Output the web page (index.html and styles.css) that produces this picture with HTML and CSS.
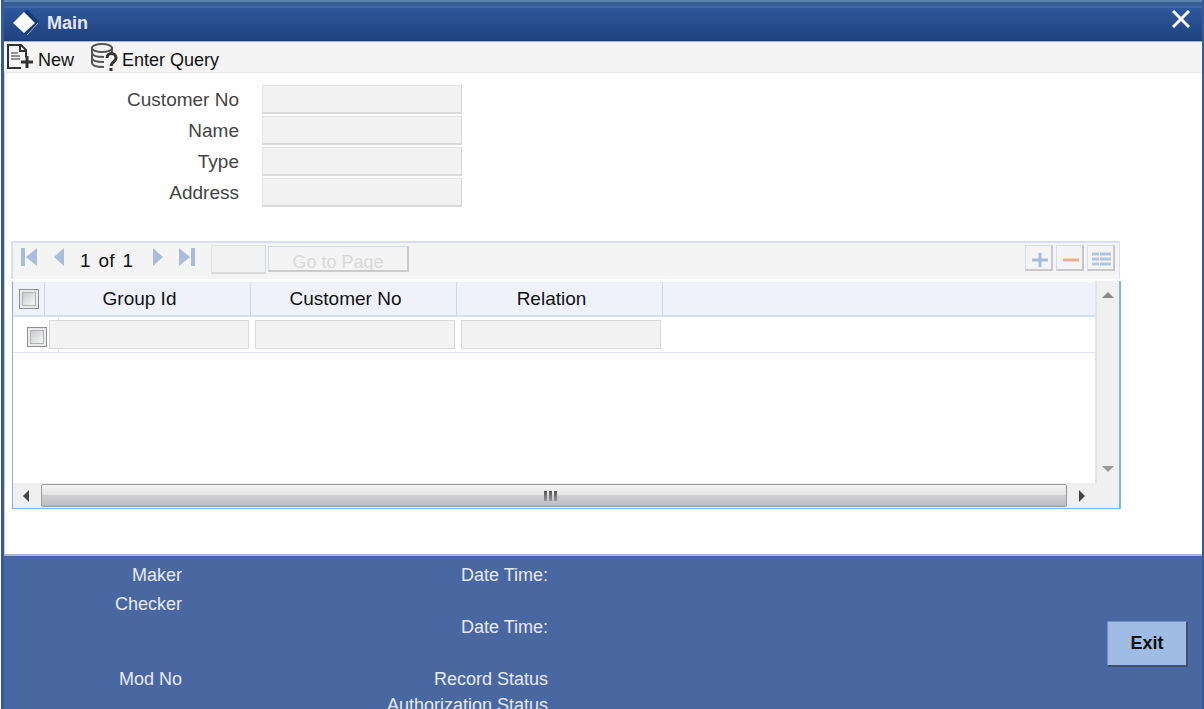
FILE: index.html
```html
<!DOCTYPE html>
<html lang="en">
<head>
<meta charset="UTF-8">
<meta name="viewport" content="width=device-width, initial-scale=1.0">
<title>Main</title>
<link rel="stylesheet" href="styles.css">
</head>
<body>

<div class="window">
  <!-- Title bar -->
  <header class="title-bar">
    <svg class="logo" width="26" height="26" viewBox="0 0 26 26">
      <path d="M11 1l4-1 11 12-12 13-3-2z" fill="#173a75"/>
      <path d="M25 13L14 25" stroke="#a9b8d4" stroke-width="1"/>
      <path d="M11 2l11 11-11 10L0 13z" fill="#fff"/>
    </svg>
    <h1>Main</h1>
    <button class="close" type="button" aria-label="Close">
      <svg width="18" height="18" viewBox="0 0 18 18"><path d="M1 1l16 16M17 1L1 17" stroke="#fff" stroke-width="3"/></svg>
    </button>
  </header>

  <!-- Toolbar -->
  <div class="toolbar">
    <button type="button">
      <svg width="28" height="26" viewBox="0 0 28 26" fill="none" stroke="#333" stroke-width="2">
        <path d="M15 24H2V1h13l5 5v7M14 1v6h6"/>
        <path d="M5 9h7M5 12h9M5 15h9" stroke-width="1"/>
        <path d="M21 12v12M15 18h12" stroke-width="3"/>
      </svg>
      <span>New</span>
    </button>
    <button type="button">
      <svg width="28" height="28" viewBox="0 0 28 28" fill="none" stroke="#555" stroke-width="1">
        <ellipse cx="12" cy="5" rx="10" ry="4" stroke-width="2"/>
        <path d="M2 5v15c0 3 4 4 12 4M22 5v5M2 10c0 3 4 4 12 4M2 15c0 3 4 4 12 4" stroke-width="2"/>
        <path d="M17 15c0-6 9-6 9 0 0 4-5 4-5 8M21 25v3" stroke="#333" stroke-width="3"/>
      </svg>
      <span>Enter Query</span>
    </button>
  </div>

  <!-- Content -->
  <main class="content">
    <form class="customer">
      <label for="custNo">Customer No</label>
      <input type="text" id="custNo" disabled>
      <label for="custName">Name</label>
      <input type="text" id="custName" disabled>
      <label for="custType">Type</label>
      <input type="text" id="custType" disabled>
      <label for="custAddress">Address</label>
      <input type="text" id="custAddress" disabled>
    </form>

    <div class="pager">
      <button class="nav" type="button" aria-label="First page" disabled>
        <svg width="18" height="18" viewBox="0 0 18 18"><path d="M1 0h4v18H1zM17 0v18L6 9z"/></svg>
      </button>
      <button class="nav" type="button" aria-label="Previous page" disabled>
        <svg width="10" height="18" viewBox="0 0 10 18"><path d="M10 0v18L0 9z"/></svg>
      </button>
      <span class="count"><span>1</span> <span>of</span> <span>1</span></span>
      <button class="nav" type="button" aria-label="Next page" disabled>
        <svg width="10" height="18" viewBox="0 0 10 18"><path d="M0 0v18l10-9z"/></svg>
      </button>
      <button class="nav" type="button" aria-label="Last page" disabled>
        <svg width="18" height="18" viewBox="0 0 18 18"><path d="M12 0h4v18h-4zM0 0v18l11-9z"/></svg>
      </button>
      <input class="page-no" type="text" aria-label="Page number" disabled>
      <button class="go" type="button" disabled>Go to Page</button>
      <div class="row-tools">
        <button type="button" aria-label="Add row" disabled>
          <svg width="24" height="22" viewBox="0 0 24 22"><path d="M14 6v14M6 13h16" stroke="#a9bddb" stroke-width="3"/></svg>
        </button>
        <button type="button" aria-label="Delete row" disabled>
          <svg width="24" height="22" viewBox="0 0 24 22"><path d="M6 13h16" stroke="#f3d5b0" stroke-width="4"/><path d="M6 13h16" stroke="#f2a9a0" stroke-width="2"/></svg>
        </button>
        <button type="button" aria-label="Single record view" disabled>
          <svg width="24" height="22" viewBox="0 0 24 22"><path d="M4 7h7M12 7h11M4 12h7M12 12h11M4 17h7M12 17h11" stroke="#b3c6e0" stroke-width="3"/></svg>
        </button>
      </div>
    </div>

    <div class="grid">
      <div class="table-area">
        <table>
          <thead>
            <tr>
              <th class="check"><input type="checkbox" aria-label="Select all"></th>
              <th class="field">Group Id</th>
              <th class="field">Customer No</th>
              <th class="field">Relation</th>
              <th></th>
            </tr>
          </thead>
          <tbody>
            <tr>
              <td class="check"><input type="checkbox" aria-label="Select row"></td>
              <td><input type="text" aria-label="Group Id" disabled></td>
              <td><input type="text" aria-label="Customer No" disabled></td>
              <td><input type="text" aria-label="Relation" disabled></td>
              <td></td>
            </tr>
          </tbody>
        </table>
      </div>
      <div class="vscroll">
        <svg width="12" height="8" viewBox="0 0 12 8"><path d="M0 7l6-6 6 6z" fill="#888"/></svg>
        <svg width="12" height="8" viewBox="0 0 12 8"><path d="M0 1l6 6 6-6z" fill="#999"/></svg>
      </div>
      <div class="hscroll">
        <svg width="8" height="12" viewBox="0 0 8 12"><path d="M7 0v12L1 6z" fill="#444"/></svg>
        <div class="thumb"><i></i><i></i><i></i></div>
        <svg width="8" height="12" viewBox="0 0 8 12"><path d="M1 0v12l6-6z" fill="#444"/></svg>
      </div>
      <div class="corner"></div>
    </div>
  </main>

  <!-- Audit footer -->
  <footer class="audit">
    <div class="audit-left">
      <span>Maker</span>
      <span>Checker</span>
      <span class="mod">Mod No</span>
    </div>
    <div class="audit-right">
      <span>Date Time:</span>
      <span class="second">Date Time:</span>
      <span class="status">Record Status</span>
      <span>Authorization Status</span>
    </div>
    <button class="exit" type="button">Exit</button>
  </footer>
</div>

</body>
</html>
```
FILE: styles.css
```css
* {
  box-sizing: border-box;
}
body {
  margin: 0;
  font-family: "Liberation Sans", Arial, sans-serif;
  font-size: 18px;
  color: #111;
  background: #fff;
}
button, input {
  font: inherit;
  margin: 0;
}
button {
  padding: 0;
  border: 0;
  background: none;
  color: inherit;
}
svg {
  display: block;
  flex: none;
}
.window {
  display: flex;
  flex-direction: column;
  height: 100vh;
  margin-left: 1px;
  overflow: hidden;
  border: 3px solid #3a5a96;
  border-width: 0 2px 0 3px;
  background: #fff;
}

/* title bar */
.title-bar {
  display: flex;
  align-items: center;
  flex: none;
  height: 42px;
  padding: 2px 12px 0 9px;
  border-top: 2px solid #5f83b2;
  border-bottom: 1px solid #a4b4d3;
  background: linear-gradient(#385d95 0, #385d95 4px, #3f69a7 4px, #3f69a7 6px, #2d589d 6px, #20427f 38px, #1b3872 39px);
}
.title-bar h1 {
  margin: 0 auto 0 8px;
  font-size: 18px;
  line-height: 24px;
  color: #e4e7ee;
}
.close {
  margin-bottom: 8px;
}

/* toolbar */
.toolbar {
  display: flex;
  align-items: center;
  flex: none;
  gap: 16px;
  height: 31px;
  padding-left: 2px;
  border-bottom: 1px solid #e6e6e6;
  background: #f4f4f4;
}
.toolbar button {
  display: flex;
  align-items: center;
  gap: 4px;
}
.toolbar span {
  padding-top: 6px;
}

/* customer form */
.content {
  flex: none;
  padding: 12px 81px 45px 6px;
  border-left: 1px solid #c3cde0;
}
.customer {
  display: grid;
  grid-template-columns: 228px 200px;
  column-gap: 23px;
  row-gap: 2px;
}
.customer label {
  font-size: 19px;
  line-height: 29px;
  text-align: right;
  color: #444;
}
input[type="text"] {
  height: 29px;
  border: 1px solid #e2e2e2;
  border-right-color: #d6d6d6;
  border-bottom: 2px solid #dadada;
  background: #f2f2f2;
}

/* record pager */
.pager {
  display: flex;
  align-items: center;
  height: 38px;
  margin: 34px 1px 2px 0;
  padding: 0 4px 4px 7px;
  border: 1px solid #d8e0ef;
  border-width: 2px 1px 0 2px;
  background: #f4f4f4;
  font-size: 19px;
}
.pager .nav {
  margin: 0 16px 4px 0;
  fill: #a9bddb;
}
.pager .count {
  display: flex;
  gap: 8px;
  margin-right: 20px;
  padding-top: 4px;
}
.pager .page-no {
  width: 55px;
  margin: 0 2px 0 -2px;
}
.pager .go {
  width: 141px;
  height: 26px;
  border: 1px solid #ccdaea;
  border-right: 2px solid #ccc;
  border-bottom: 2px solid #ccc;
  overflow: hidden;
  font-size: 18px;
  line-height: 30px;
  color: #dadada;
}
.row-tools {
  display: flex;
  gap: 3px;
  margin: 0 0 2px auto;
}
.row-tools button {
  width: 28px;
  height: 26px;
  border: 1px solid #d3dded;
  border-right: 2px solid #c8c8c8;
  border-bottom: 2px solid #c8c8c8;
}

/* data grid */
.grid {
  display: grid;
  grid-template-columns: 1fr 24px;
  grid-template-rows: 202px 25px;
  margin-left: 1px;
  border: 1px solid #86b1e6;
  border-width: 0 2px 1px 1px;
}
.table-area {
  padding-top: 1px;
  overflow: hidden;
}
table {
  width: 100%;
  border-collapse: separate;
  border-spacing: 0;
  table-layout: fixed;
}
th {
  height: 35px;
  padding: 0;
  border-right: 1px solid #ccd7ea;
  border-bottom: 2px solid #d5dfee;
  background: #eff2fb;
  font-size: 19px;
  font-weight: normal;
}
th:last-child {
  border-right: 0;
}
th.check {
  width: 32px;
}
th.field {
  width: 206px;
  padding-right: 16px;
}
td {
  height: 36px;
  padding: 0 0 0 4px;
  border-bottom: 1px solid #dfe6f5;
}
td input[type="text"] {
  display: block;
  width: 200px;
  border: 1px solid #dadada;
}
td.check {
  position: relative;
  padding-left: 14px;
}
/* frame of the row selector, reaches under the first field */
td.check::after {
  content: "";
  position: absolute;
  top: 0;
  left: 45px;
  width: 1px;
  height: 36px;
  background: #dfe6f5;
}
td.check + td input {
  position: relative;
}
input[type="checkbox"] {
  appearance: none;
  display: block;
  width: 20px;
  height: 20px;
  border: 1px solid #8f8f8f;
  background: linear-gradient(135deg, #c9cbce, #f6f6f6) center / 12px 12px no-repeat, #ebebeb;
  outline: 1px solid #b2b2b2;
  outline-offset: -4px;
}
th.check input {
  margin-left: 6px;
}
td.check input {
  margin-top: 4px;
}

/* scrollbars */
.vscroll {
  display: flex;
  flex-direction: column;
  align-items: center;
  justify-content: space-between;
  padding: 10px 0;
  border-left: 2px solid #e3e3e3;
  background: #f0f0f0;
}
.hscroll {
  display: flex;
  align-items: center;
  gap: 11px;
  padding: 0 9px;
  background: #f0f0f0;
}
.thumb {
  display: flex;
  flex: 1;
  align-items: center;
  justify-content: center;
  gap: 2px;
  height: 23px;
  padding-right: 8px;
  border: 1px solid #999;
  border-radius: 2px;
  background: linear-gradient(#f3f3f3, #e4e4e5 45%, #cfcfd2 50%, #bcbcbe);
}
.thumb i {
  width: 3px;
  height: 10px;
  background: linear-gradient(#555, #999);
}
.corner {
  background: #f0f0f0;
}

/* audit footer */
.audit {
  display: flex;
  align-items: flex-start;
  flex: 1 0 auto;
  padding: 6px 14px 0 0;
  border-top: 2px solid #a9b9d7;
  background: #4968a1;
}
.audit span {
  display: block;
  line-height: 26px;
  text-align: right;
  color: #e6e9f0;
}
.audit-left {
  display: flex;
  flex-direction: column;
  gap: 3px;
  width: 178px;
}
.audit-left .mod {
  margin-top: 46px;
}
.audit-right {
  width: 366px;
}
.audit-right .second,
.audit-right .status {
  margin-top: 26px;
}
.exit {
  width: 81px;
  height: 46px;
  margin: 59px 0 0 auto;
  border: 1px solid #7190c4;
  border-right: 2px solid #3f4f6e;
  border-bottom: 2px solid #3f4f6e;
  background: #a0bce4;
  font-weight: bold;
}
```
